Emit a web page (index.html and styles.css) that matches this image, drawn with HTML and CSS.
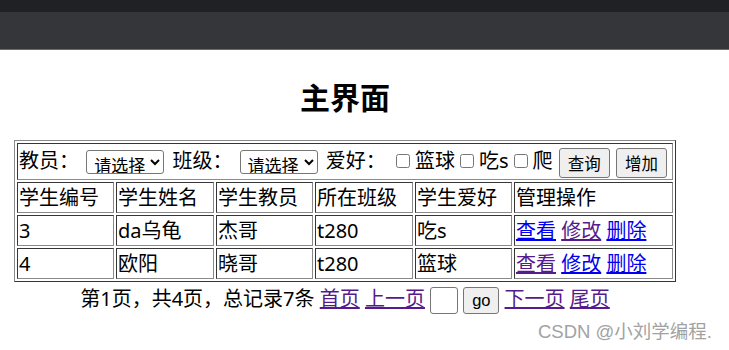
FILE: index.html
```html
<!DOCTYPE html>
<html lang="zh">
<head>
<meta charset="utf-8">
<title>主界面</title>
<link rel="stylesheet" href="styles.css">
</head>
<body>
<div class="chrome">
  <div class="chrome-top"></div>
  <div class="chrome-bar"></div>
</div>
<div class="page">
  <h2 class="title">主界面</h2>
  <table class="grid">
    <colgroup>
      <col class="c1"><col class="c2"><col class="c3"><col class="c4"><col class="c5"><col class="c6">
    </colgroup>
    <tr>
      <td colspan="6" class="form-cell">教员：&nbsp;<select class="sel"><option>请选择</option></select> 班级：&nbsp;<select class="sel"><option>请选择</option></select> 爱好：&nbsp;<input type="checkbox" class="chk">篮球<input type="checkbox" class="chk">吃s<input type="checkbox" class="chk">爬 <button class="btn">查询</button> <button class="btn">增加</button></td>
    </tr>
    <tr>
      <td>学生编号</td>
      <td>学生姓名</td>
      <td>学生教员</td>
      <td>所在班级</td>
      <td>学生爱好</td>
      <td>管理操作</td>
    </tr>
    <tr>
      <td>3</td>
      <td>da乌龟</td>
      <td>杰哥</td>
      <td>t280</td>
      <td>吃s</td>
      <td><a href="#" class="link">查看</a> <a href="#" class="link visited">修改</a> <a href="#" class="link">删除</a></td>
    </tr>
    <tr>
      <td>4</td>
      <td>欧阳</td>
      <td>晓哥</td>
      <td>t280</td>
      <td>篮球</td>
      <td><a href="#" class="link visited">查看</a> <a href="#" class="link">修改</a> <a href="#" class="link">删除</a></td>
    </tr>
  </table>
  <div class="pager">第1页，共4页，总记录7条 <a href="#" class="link visited">首页</a> <a href="#" class="link visited">上一页</a> <input type="text" class="page-input"> <button class="btn go">go</button> <a href="#" class="link visited">下一页</a> <a href="#" class="link visited">尾页</a></div>
</div>
<div class="watermark">CSDN @小刘学编程.</div>
</body>
</html>
```
FILE: styles.css
```css
html, body {
  margin: 0;
  padding: 0;
  background: #ffffff;
}
body {
  font-family: "Noto Sans", "Noto Sans CJK SC", sans-serif;
  font-size: 20px;
  color: #000;
  position: relative;
  width: 729px;
  height: 350px;
  overflow: hidden;
}
.chrome-top {
  height: 12px;
  background: #202124;
}
.chrome-bar {
  height: 37px;
  background: #35363a;
  border-bottom: 1px solid #6a6b70;
}
.page {
  margin-left: 8px;
  width: 674px;
}
.title {
  margin: 28px 0 26px;
  font-size: 30px;
  line-height: 36px;
  font-weight: bold;
  text-align: center;
  font-family: "Noto Sans CJK SC", sans-serif;
}
.grid {
  margin: 0 auto;
  width: 662px;
  border: 1px outset #8a8a8a;
  border-spacing: 2px;
  table-layout: fixed;
}
.c1 { width: 97px; }
.c2 { width: 98px; }
.c3 { width: 97px; }
.c4 { width: 98px; }
.c5 { width: 97px; }
.c6 { width: 159px; }
.grid td {
  border: 1px inset #8a8a8a;
  padding: 1px;
  line-height: 27px;
  height: 27px;
  white-space: nowrap;
  vertical-align: middle;
}
.grid td.form-cell {
  line-height: 32px;
  height: 32px;
}
.sel {
  font-family: "Noto Sans CJK SC", sans-serif;
  font-size: 17px;
  width: 78px;
  height: 24px;
  margin: 0 3px 0 2px;
  padding: 0 0 0 3px;
  vertical-align: middle;
  border: 1px solid #767676;
  border-radius: 3px;
  background-color: #fff;
  color: #000;
  position: relative;
  top: -1px;
}
.chk {
  width: 14px;
  height: 14px;
  margin: 0 5px 0 5px;
  vertical-align: middle;
  position: relative;
  top: -2px;
}
.btn {
  font-family: "Noto Sans CJK SC", sans-serif;
  font-size: 16.5px;
  height: 30px;
  padding: 0 8px;
  vertical-align: middle;
  border: 1px solid #767676;
  border-radius: 3px;
  background: #efefef;
  color: #000;
  line-height: 26px;
}
.form-cell .btn {
  margin-left: 1px;
}
.link {
  color: #0000ee;
  text-decoration: underline;
}
.link.visited {
  color: #551a8b;
}
.pager {
  text-align: center;
  line-height: 30px;
  margin-top: 2px;
}
.page-input {
  width: 28px;
  height: 27px;
  box-sizing: border-box;
  border: 1px solid #767676;
  border-radius: 3px;
  vertical-align: middle;
  padding: 0;
}
.btn.go {
  font-family: "Liberation Sans", Arial, sans-serif;
  height: 27px;
  width: 36px;
  padding: 0;
  line-height: 24px;
}
.watermark {
  position: absolute;
  left: 538px;
  top: 321px;
  font-family: "Liberation Sans", "Noto Sans CJK SC", sans-serif;
  font-size: 18.5px;
  line-height: 22px;
  color: #a2a2a2;
  white-space: nowrap;
}
```
